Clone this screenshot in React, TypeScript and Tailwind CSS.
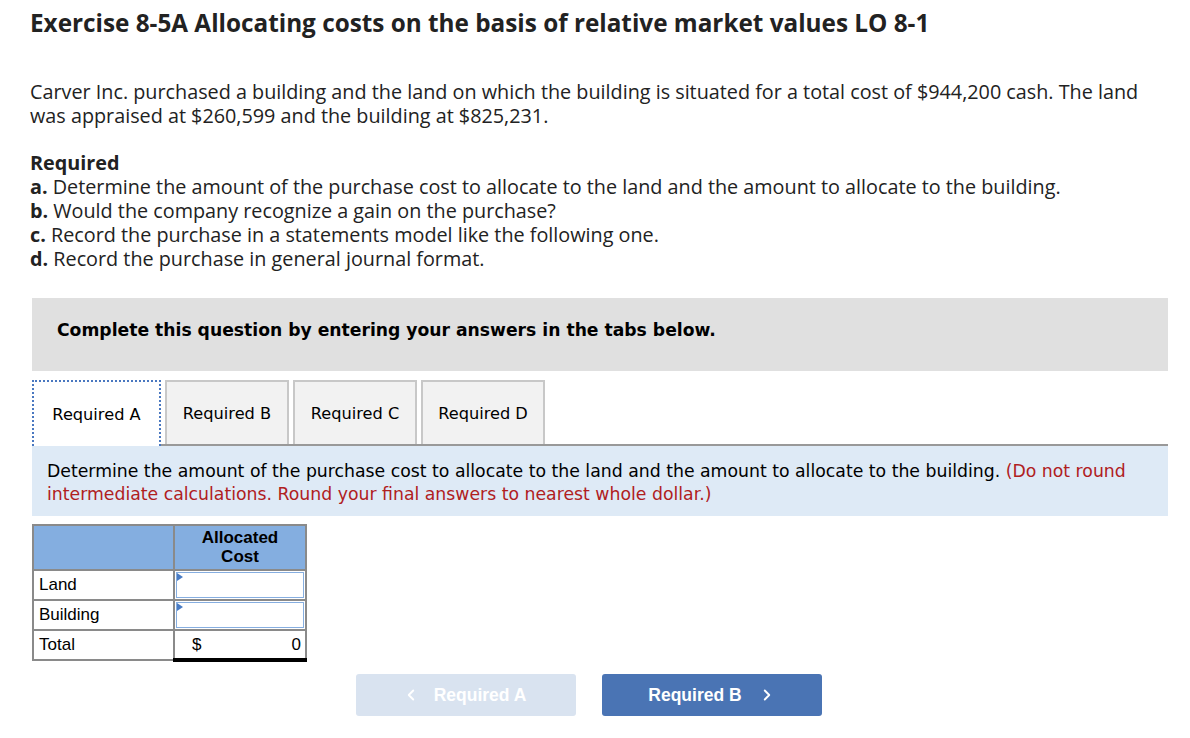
import { ChevronLeft, ChevronRight } from "lucide-react";

const tabs = ["Required A", "Required B", "Required C", "Required D"];

const main = { fontFamily: '"Open Sans", "Liberation Sans", sans-serif' };
const verdana = { fontFamily: '"DejaVu Sans", Verdana, sans-serif' };
const arial = { fontFamily: '"Liberation Sans", Arial, sans-serif' };

function InputCell() {
  return (
    <td className="border-2 border-[#8a8a8a] p-0 h-[30px]">
      <div className="relative h-[26px] m-[1px] border border-[#86aee0] bg-white">
        <span className="absolute left-0 top-0 w-0 h-0 border-t-[4px] border-b-[4px] border-l-[6px] border-t-transparent border-b-transparent border-l-[#4a7cc4]" />
      </div>
    </td>
  );
}

export default function App() {
  return (
    <div className="bg-white w-[1190px] min-h-[738px] text-[#222]" style={main}>
      <div className="px-[30px] pt-[7px]">
        <h1 className="text-[24.3px] font-bold leading-[32px]">
          Exercise 8-5A Allocating costs on the basis of relative market values LO 8-1
        </h1>
        <p className="mt-[41px] text-[19.8px] leading-[24px]">
          Carver Inc. purchased a building and the land on which the building is situated for a total cost of $944,200 cash. The land
          <br />
          was appraised at $260,599 and the building at $825,231.
        </p>
        <div className="mt-[23px] text-[19.8px] leading-[24px]">
          <div className="font-bold">Required</div>
          <div><b>a.</b> Determine the amount of the purchase cost to allocate to the land and the amount to allocate to the building.</div>
          <div><b>b.</b> Would the company recognize a gain on the purchase?</div>
          <div><b>c.</b> Record the purchase in a statements model like the following one.</div>
          <div><b>d.</b> Record the purchase in general journal format.</div>
        </div>
      </div>

      <div className="mx-[32px] mt-[27px] w-[1136px]">
        <div className="h-[73px] bg-[#e0e0e0] flex items-center px-[25px] pb-[7px]">
          <span className="text-[17.2px] font-bold text-black" style={verdana}>
            Complete this question by entering your answers in the tabs below.
          </span>
        </div>

        <div className="mt-[9px] flex items-end gap-[3px] border-b-2 border-[#999] h-[66px]" style={verdana}>
          {tabs.map((t, i) =>
            i === 0 ? (
              <div
                key={t}
                className="h-[66px] -mb-[2px] w-[129px] bg-white border-2 border-dotted border-[#4a78c0] border-b-0 flex items-center justify-center text-[16.2px] text-black pt-[2px]"
              >
                {t}
              </div>
            ) : (
              <div
                key={t}
                className="h-[64px] w-[124px] bg-[#f2f2f2] border-2 border-[#c8c8c8] border-b-0 flex items-center justify-center text-[16.2px] text-black ml-[1px] pt-[3px]"
              >
                {t}
              </div>
            )
          )}
        </div>

        <div className="bg-[#deeaf6] h-[70px] px-[15px] pt-[14px] text-[17.3px] leading-[23px] text-black" style={verdana}>
          Determine the amount of the purchase cost to allocate to the land and the amount to allocate to the building.{" "}
          <span className="text-[#b0201e]">
            (Do not round intermediate calculations. Round your final answers to nearest whole dollar.)
          </span>
        </div>

        <table className="mt-[8px] border-collapse text-[17px] text-black" style={arial}>
          <tbody>
            <tr className="bg-[#84aee0] h-[45px]">
              <th className="border-2 border-[#8a8a8a] w-[141px]" />
              <th className="border-2 border-[#8a8a8a] w-[132px] font-bold leading-[19px] pb-[2px]">
                Allocated
                <br />
                Cost
              </th>
            </tr>
            <tr>
              <td className="border-2 border-[#8a8a8a] px-[5px] h-[30px]">Land</td>
              <InputCell />
            </tr>
            <tr>
              <td className="border-2 border-[#8a8a8a] px-[5px] h-[30px]">Building</td>
              <InputCell />
            </tr>
            <tr>
              <td className="border-2 border-[#8a8a8a] px-[5px] h-[30px]">Total</td>
              <td className="border-2 border-[#8a8a8a] border-t-black border-b-[4px] border-b-black p-0 h-[30px]">
                <div className="flex justify-between px-[17px] pr-[4px]">
                  <span>$</span>
                  <span>0</span>
                </div>
              </td>
            </tr>
          </tbody>
        </table>

        <div className="mt-[12px] flex gap-[26px] pl-[324px]" style={arial}>
          <button className="w-[220px] h-[42px] rounded-[3px] bg-[#d9e3f0] text-white font-bold text-[17.5px] flex items-center justify-center gap-[14px] pr-[4px]">
            <ChevronLeft size={18} strokeWidth={2.5} />
            Required A
          </button>
          <button className="w-[220px] h-[42px] rounded-[3px] bg-[#4a74b4] text-white font-bold text-[17.5px] flex items-center justify-center gap-[16px]">
            Required B
            <ChevronRight size={18} strokeWidth={2.5} />
          </button>
        </div>
      </div>
    </div>
  );
}
